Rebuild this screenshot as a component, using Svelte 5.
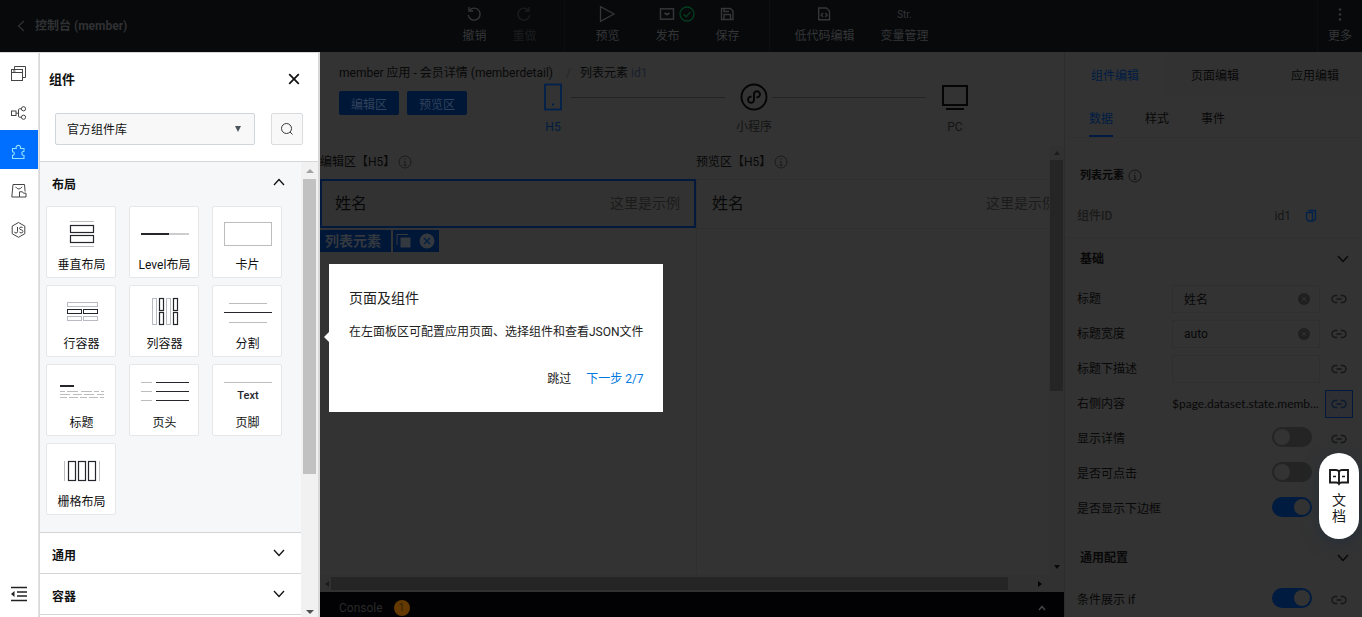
<script>
  const groups = [
    [
      { label: '撤销', icon: 'undo' },
      { label: '重做', icon: 'redo', off: true }
    ],
    [
      { label: '预览', icon: 'play' },
      { label: '发布', icon: 'publish', done: true },
      { label: '保存', icon: 'save' }
    ],
    [
      { label: '低代码编辑', icon: 'code' },
      { label: '变量管理', icon: 'str' }
    ]
  ];
  const rail = [
    { name: '页面', icon: 'pages' },
    { name: '结构', icon: 'tree' },
    { name: '组件', icon: 'puzzle' },
    { name: '素材', icon: 'assets' },
    { name: '脚本', icon: 'js' }
  ];
  const cards = ['垂直布局', 'Level布局', '卡片', '行容器', '列容器', '分割', '标题', '页头', '页脚', '栅格布局'];
  const fields = [
    { id: 'title', label: '标题', kind: 'text', value: '姓名' },
    { id: 'width', label: '标题宽度', kind: 'text', value: 'auto' },
    { id: 'desc', label: '标题下描述', kind: 'text', value: '' },
    { id: 'right', label: '右侧内容', kind: 'bound', value: '$page.dataset.state.memb...' },
    { id: 'detail', label: '显示详情', kind: 'switch', on: false },
    { id: 'click', label: '是否可点击', kind: 'switch', on: false },
    { id: 'border', label: '是否显示下边框', kind: 'switch', on: true }
  ];
</script>

{#snippet icon(name)}
  {#if name === 'undo' || name === 'redo'}
    <svg width="16" height="16" viewBox="0 0 16 16" fill="none" stroke="currentColor" stroke-width="1.4">
      <g transform={name === 'redo' ? 'translate(16 0) scale(-1 1)' : undefined}>
        <path d="M3.6 4.2A6 6 0 1 1 2.2 9" /><path d="M3 1v4h4.2" />
      </g>
    </svg>
  {:else if name === 'play'}
    <svg width="18" height="18" viewBox="0 0 18 18" fill="none" stroke="currentColor" stroke-width="1.3"><path d="M2.5 1.6v14.8L16 9z" /></svg>
  {:else if name === 'publish'}
    <svg width="16" height="16" viewBox="0 0 16 16" fill="none" stroke="currentColor" stroke-width="1.5"><rect x="1.5" y="2.8" width="13" height="10.4" /><path d="M5.500 7l2.500 1.600L10.500 7" stroke-width="2" /></svg>
  {:else if name === 'save'}
    <svg width="16" height="16" viewBox="0 0 16 16" fill="none" stroke="currentColor" stroke-width="1.4"><path d="M2.5 2.5h9l2.5 2.5v8.5H2.5zM5 13.500V8.500h6.500v5M5 2.500v3h5" /></svg>
  {:else if name === 'code'}
    <svg width="16" height="16" viewBox="0 0 16 16" fill="none" stroke="currentColor" stroke-width="1.4"><path d="M2.700 2h7.800l3 3v8.800H2.700zM7 7L5.200 9 7 11M9.300 7l1.800 2-1.800 2" /></svg>
  {:else if name === 'pages'}
    <svg width="18" height="18" viewBox="0 0 18 18" fill="none" stroke="currentColor"><rect x="1.500" y="4.500" width="11" height="11" /><path d="M1.500 7.500h11M4.500 4V1.500h11v11h-2.500M3 6h2.500" /></svg>
  {:else if name === 'tree'}
    <svg width="18" height="18" viewBox="0 0 18 18" fill="none" stroke="currentColor"><rect x="1.500" y="7" width="4.500" height="4.500" /><circle cx="13.500" cy="4.800" r="2.100" /><circle cx="13.500" cy="13.200" r="2.100" /><path d="M6 9.200h3M11.400 4.800H9.500q-1 0-1 1v6.400q0 1 1 1h1.900" /></svg>
  {:else if name === 'puzzle'}
    <svg width="18" height="18" viewBox="0 0 18 18" fill="none" stroke="currentColor" stroke-width="1.100"><path d="M2.500 5.500h3.700a2.300 2.300 0 1 1 4.300 0h3.500v2.700a2.100 2.100 0 1 0 0 4.300v3H2.500v-3.200a1.800 1.800 0 0 0 0-3.600z" /></svg>
  {:else if name === 'assets'}
    <svg width="18" height="18" viewBox="0 0 18 18" fill="none" stroke="currentColor"><path d="M9.500 15H1.800L3 2.500h11.500l.6 7M5.500 4.800q3.300 4.400 6.600 0M9.500 9.800h3l1 1.400h2.500V15H9.500z" /></svg>
  {:else if name === 'js'}
    <svg width="18" height="18" viewBox="0 0 18 18" fill="none" stroke="currentColor"><path d="M8.500 1.500l6.300 3.600v7.600l-6.300 3.600-6.300-3.600V5.100zM7.500 6v4.500q0 1.500-1.500 1.500t-1.500-1.200M12.700 7q-.4-.9-1.600-.9-1.600 0-1.600 1.300 0 1.100 1.700 1.400 1.700.3 1.700 1.600 0 1.500-1.700 1.500-1.400 0-1.800-1.100" /></svg>
  {:else if name === 'link'}
    <svg width="16" height="10" viewBox="0 0 16 10" fill="none" stroke="currentColor" stroke-width="1.400"><path d="M6.200 1.500H4.500a3.500 3.500 0 0 0 0 7h1.700M9.800 1.500h1.700a3.500 3.500 0 0 1 0 7H9.800M5.500 5h5" /></svg>
  {:else if name === 'info'}
    <svg width="14" height="14" viewBox="0 0 14 14" fill="none" stroke="currentColor"><circle cx="7" cy="7" r="6" /><path d="M7 3.300v1.400M5.800 6.500H7v3.800M5.500 10.400h3" /></svg>
  {:else if name === 'down'}
    <svg width="12" height="8" viewBox="0 0 12 8" fill="none" stroke="currentColor" stroke-width="1.300"><path d="M1 1l5 5.500L11 1" /></svg>
  {:else if name === 'up'}
    <svg width="12" height="8" viewBox="0 0 12 8" fill="none" stroke="currentColor" stroke-width="1.300"><path d="M1 7l5-5.500L11 7" /></svg>
  {/if}
{/snippet}

{#snippet art(name)}
  <svg class="art" width="48" height="38" viewBox="0 0 48 38" fill="none" stroke="#25262c">
    {#if name === '垂直布局'}
      <path d="M12 6.500h24M12 31.500h24" stroke="#bdbdbf" />
      <rect x="12.500" y="10.500" width="23" height="7" stroke-width="1.200" /><rect x="12.500" y="20.500" width="23" height="7" stroke-width="1.200" />
    {:else if name === 'Level布局'}
      <path d="M28 19h20" stroke="#bdbdbf" stroke-width="1.500" /><path d="M0 19h28" stroke-width="2" />
    {:else if name === '卡片'}
      <rect x=".5" y="7.500" width="47" height="23" stroke="#bdbdbf" />
    {:else if name === '行容器'}
      <g stroke="#b8bac4"><rect x="9.500" y="8.500" width="30" height="4" /><rect x="9.500" y="22.500" width="14" height="4" /><rect x="25.500" y="22.500" width="14" height="4" /></g>
      <rect x="9.500" y="15.500" width="14" height="4" /><rect x="25.500" y="15.500" width="14" height="4" />
    {:else if name === '列容器'}
      <g stroke="#b8bac4"><rect x="11.500" y="4.500" width="4" height="26" /><rect x="25.500" y="4.500" width="4" height="26" /></g>
      <g stroke-width="1.200"><rect x="18.500" y="4.500" width="4" height="12" /><rect x="18.500" y="18.500" width="4" height="12" /><rect x="32.500" y="4.500" width="4" height="12" /><rect x="32.500" y="18.500" width="4" height="12" /></g>
    {:else if name === '分割'}
      <path d="M5 9.500h38M5 28.500h38" stroke="#bdbdbf" /><path d="M0 18.500h48" />
    {:else if name === '标题'}
      <path d="M2 13h14" stroke-width="2" />
      <path d="M2 18.500h44" stroke="#bdbdbf" stroke-dasharray="5 2 11 3 11 2" /><path d="M2 21.500h44" stroke="#bdbdbf" stroke-dasharray="10 3 9 2" /><path d="M2 24.500h44" stroke="#bdbdbf" stroke-dasharray="7 2 9 2" />
    {:else if name === '页头'}
      <path d="M0 9.500h11M0 18.500h11M0 27.500h11" stroke="#bdbdbf" /><path d="M15 9.500h33M15 18.500h33M15 27.500h33" />
    {:else if name === '页脚'}
      <path d="M0 9.500h48" stroke="#bdbdbf" />
      <text x="24" y="26" text-anchor="middle" font-size="11" font-weight="500" fill="#25262c" stroke="none">Text</text>
    {:else}
      <path d="M6.500 9v20M41.500 9v20" stroke="#bdbdbf" />
      <g stroke-width="1.200"><rect x="10.500" y="9.500" width="7" height="19" /><rect x="20.500" y="9.500" width="7" height="19" /><rect x="30.500" y="9.500" width="7" height="19" /></g>
    {/if}
  </svg>
{/snippet}

<div class="app">
  <header class="top">
    <a class="brand" href="#console">
      <svg width="8" height="12" viewBox="0 0 8 12" fill="none" stroke="currentColor" stroke-width="1.300"><path d="M7 1L1.500 6 7 11" /></svg>
      <span>控制台 (member)</span>
    </a>
    {#each groups as group, g}
      <div class="group g{g}">
        {#each group as tool}
          <button class="tool" class:off={tool.off}>
            <span class="glyph">
              {#if tool.icon === 'str'}<span class="str">Str.</span>{:else}{@render icon(tool.icon)}{/if}
              {#if tool.done}
                <svg class="done" width="16" height="16" viewBox="0 0 16 16" fill="none" stroke="currentColor" stroke-width="1.300"><circle cx="8" cy="8" r="7" /><path d="M4.500 8.200l2.600 2.500 4.400-4.800" /></svg>
              {/if}
            </span>
            <span>{tool.label}</span>
          </button>
        {/each}
      </div>
    {/each}
    <button class="tool more">
      <span class="glyph"><svg width="16" height="16" viewBox="0 0 16 16" fill="currentColor"><circle cx="8" cy="3.500" r="1.300" /><circle cx="8" cy="8.500" r="1.300" /><circle cx="8" cy="13.500" r="1.300" /></svg></span>
      <span>更多</span>
    </button>
  </header>

  <div class="main">
    <nav class="rail">
      {#each rail as item}
        <button class:active={item.icon === 'puzzle'} aria-label={item.name}>{@render icon(item.icon)}</button>
      {/each}
      <button class="collapse" aria-label="收起">
        <svg width="18" height="16" viewBox="0 0 18 16" stroke="currentColor" stroke-width="1.700"><path d="M1 1.500h16M7 6h10M7 10h10M1 14.500h16" /><path d="M1 8l3.500-3v6z" fill="currentColor" stroke="none" /></svg>
      </button>
    </nav>

    <aside class="library">
      <div class="lib-head">
        <h2>组件</h2>
        <button aria-label="关闭"><svg width="12" height="12" viewBox="0 0 12 12" stroke="#111" stroke-width="1.700"><path d="M1.200 1.200l9.600 9.600M10.800 1.200l-9.600 9.600" /></svg></button>
      </div>
      <div class="lib-filter">
        <div class="select">
          <select aria-label="组件库"><option>官方组件库</option></select>
          <svg width="6" height="6" viewBox="0 0 6 6" fill="#4a565c"><path d="M0 0h6L3 6z" /></svg>
        </div>
        <button class="search" aria-label="搜索"><svg width="14" height="14" viewBox="0 0 14 14" fill="none" stroke="#3a3a3a"><circle cx="6.500" cy="6.500" r="5" /><path d="M10 10l2.500 2.500" /></svg></button>
      </div>
      <div class="lib-body">
        <div class="sections">
          <section class="open">
            <button class="sec-head"><span>布局</span>{@render icon('up')}</button>
            <div class="cards">
              {#each cards as card}
                <button class="card">{@render art(card)}<span>{card}</span></button>
              {/each}
            </div>
          </section>
          <section><button class="sec-head"><span>通用</span>{@render icon('down')}</button></section>
          <section><button class="sec-head"><span>容器</span>{@render icon('down')}</button></section>
        </div>
        <div class="vbar light">
          <svg width="8" height="4" viewBox="0 0 8 4" fill="#a3a3a3"><path d="M0 4l4-4 4 4z" /></svg>
          <div class="track"><i></i></div>
          <svg width="8" height="4" viewBox="0 0 8 4" fill="#505050"><path d="M0 0l4 4 4-4z" /></svg>
        </div>
      </div>
    </aside>

    <main class="center">
      <div class="crumbs"><span>member 应用 - 会员详情 (memberdetail)</span><span class="sep">/</span><span>列表元素 <em>id1</em></span></div>
      <div class="modes">
        <button class="primary">编辑区</button>
        <button class="primary">预览区</button>
        <div class="steps">
          <button class="step on"><svg width="18" height="28" viewBox="0 0 18 28" fill="none" stroke="currentColor" stroke-width="1.800"><rect x="1" y="1.500" width="16" height="25" /><path d="M8 21.500h2" /></svg><span>H5</span></button>
          <i></i>
          <button class="step"><svg width="28" height="28" viewBox="0 0 28 28" fill="none" stroke="currentColor" stroke-width="1.900"><circle cx="14" cy="14" r="12.500" /><path d="M11.500 13.800a3 3 0 1 0 2.500 3V11.200a3 3 0 1 1 2.500 3" /></svg><span>小程序</span></button>
          <i></i>
          <button class="step"><svg width="28" height="28" viewBox="0 0 28 28" fill="none" stroke="currentColor" stroke-width="2"><rect x="2" y="3" width="24" height="19" /><path d="M5 26h18" /></svg><span>PC</span></button>
        </div>
      </div>

      <div class="stage">
        <div class="canvas">
          <div class="pane">
            <h3>编辑区【H5】{@render icon('info')}</h3>
            <div class="item picked"><span>姓名</span><small>这里是示例</small></div>
            <div class="tag">
              <b>列表元素</b>
              <span class="acts">
                <svg width="16" height="16" viewBox="0 0 16 16"><path d="M1 12V1.500h11" fill="none" stroke="currentColor" /><rect x="4.500" y="4.500" width="10" height="10" fill="currentColor" /></svg>
                <svg width="16" height="16" viewBox="0 0 16 16"><circle cx="8" cy="8" r="7.500" fill="currentColor" /><path d="M5 5l6 6M11 5l-6 6" stroke="#001e40" stroke-width="1.300" /></svg>
              </span>
            </div>
          </div>
          <div class="pane">
            <h3>预览区【H5】{@render icon('info')}</h3>
            <div class="screen"><div class="item"><span>姓名</span><small>这里是示例</small></div></div>
          </div>
        </div>
        <div class="vbar dim">
          <svg width="6" height="4" viewBox="0 0 6 4" fill="#1c1c1c"><path d="M0 4l3-4 3 4z" /></svg>
          <div class="track"><i></i></div>
          <svg width="6" height="4" viewBox="0 0 6 4" fill="#0a0a0a"><path d="M0 0l3 4 3-4z" /></svg>
        </div>
      </div>
      <div class="hbar">
        <svg width="4" height="6" viewBox="0 0 4 6" fill="#1c1c1c"><path d="M4 0L0 3l4 3z" /></svg>
        <div class="htrack"><i></i></div>
        <svg width="4" height="6" viewBox="0 0 4 6" fill="#050505"><path d="M0 0l4 3-4 3z" /></svg>
      </div>
      <footer><span>Console</span><b>1</b><svg width="8" height="6" viewBox="0 0 8 6" fill="none" stroke="currentColor" stroke-width="1.500"><path d="M1 5l3-3.500L7 5" /></svg></footer>
    </main>

    <aside class="props">
      <div class="tabs"><button class="on">组件编辑</button><button>页面编辑</button><button>应用编辑</button></div>
      <div class="subtabs"><button class="on">数据</button><button>样式</button><button>事件</button></div>
      <h4 class="kind">列表元素 {@render icon('info')}</h4>
      <div class="row ident">
        <b>组件ID</b><span>id1</span>
        <button aria-label="复制"><svg width="12" height="14" viewBox="0 0 12 14" fill="none" stroke="currentColor" stroke-width="1.300"><path d="M3.500 1.500h7v8.500L8.500 12" /><path d="M1.500 3.500h6v8.500h-4l-2-2z" /></svg></button>
      </div>
      <h4 class="block">基础{@render icon('down')}</h4>
      {#each fields as f}
        <div class="row">
          <label for={f.id}>{f.label}</label>
          {#if f.kind === 'text'}
            <div class="field">
              <input id={f.id} type="text" value={f.value} />
              {#if f.value}<svg width="12" height="12" viewBox="0 0 12 12"><circle cx="6" cy="6" r="6" fill="#202020" /><path d="M4.200 4.200l3.600 3.600M7.800 4.200L4.200 7.800" stroke="#333" /></svg>{/if}
            </div>
          {:else if f.kind === 'bound'}
            <output id={f.id}>{f.value}</output>
          {:else}
            <input id={f.id} class="switch" type="checkbox" checked={f.on} />
          {/if}
          <button class="link" class:bound={f.kind === 'bound'} aria-label="绑定数据">{@render icon('link')}</button>
        </div>
      {/each}
      <h4 class="block second">通用配置{@render icon('down')}</h4>
      <div class="row">
        <label for="cond">条件展示 if</label>
        <input id="cond" class="switch" type="checkbox" checked />
        <button class="link" aria-label="绑定数据">{@render icon('link')}</button>
      </div>
    </aside>
  </div>

  <div class="guide" role="dialog" aria-labelledby="guide-title">
    <h2 id="guide-title">页面及组件</h2>
    <p>在左面板区可配置应用页面、选择组件和查看JSON文件</p>
    <div class="guide-foot"><button>跳过</button><button class="next">下一步 2/7</button></div>
  </div>

  <button class="docs">
    <svg width="20" height="18" viewBox="0 0 20 18" fill="none" stroke="#1a1a1a" stroke-width="1.900"><path d="M10 3.300Q9 2 7 2H1v12.500h6.500q1.500 0 2.500 1.500 1-1.500 2.500-1.500H19V2h-6q-2 0-3 1.300zV16" /><path d="M4 8.500h3M13 8.500h3" stroke-width="1.600" /></svg>
    <span>文<br />档</span>
  </button>
</div>

<style>
  :global(body) { background: #333; }
  .app, .app :global(*) { box-sizing: border-box; }
  .app {
    position: relative;
    display: flex;
    flex-direction: column;
    height: 100vh;
    overflow: hidden;
    font: 12px/20px Roboto, "Noto Sans CJK SC", sans-serif;
    color: #080808;
  }
  button, input, select { font: inherit; color: inherit; }
  button { padding: 0; border: 0; background: none; cursor: pointer; }
  h2, h3, h4, p { margin: 0; font-size: 12px; }
  svg { flex: none; display: block; }

  .top { flex: none; display: flex; height: 52px; background: #07090b; color: #343638; }
  .brand { width: 33%; display: flex; align-items: center; gap: 10px; padding-left: 17px; color: #303133; font-weight: 700; text-decoration: none; }
  .group { display: flex; }
  .g1 { padding: 0 12px; margin: 0 14px 0 15px; border: solid #0c0e10; border-width: 0 1px; }
  .tool { display: flex; flex-direction: column; align-items: center; gap: 4px; padding-top: 6px; }
  .g0 .tool { width: 50px; }
  .g1 .tool { width: 60px; }
  .g2 .tool { width: 80px; }
  .off { color: #1b1d1f; }
  .glyph { display: flex; align-items: center; justify-content: center; height: 16px; position: relative; }
  .done { position: absolute; left: 20px; color: #053d20; }
  .str { font-size: 10px; padding-top: 2px; }
  .more { width: 45px; margin-left: auto; border-left: 1px solid #0c0e10; }

  .main { flex: 1; display: flex; min-height: 0; }
  .rail { flex: none; width: 39px; display: flex; flex-direction: column; background: #fff; box-shadow: inset 0 1px #d8d8d8; border-right: 1px solid #e4e4e4; color: #444; }
  .rail button { height: 39px; display: flex; align-items: center; justify-content: center; padding-top: 4px; }
  .rail .active { background: #006eff; color: #8fe0ff; }
  .rail .collapse { margin-top: auto; margin-bottom: 6px; color: #222; }

  .library { flex: none; width: 281px; display: flex; flex-direction: column; background: #fff; border-top: 1px solid #d8d8d8; border-left: 1px solid #d8d8d8; border-right: 2px solid #d8d8d8; color: #111; }
  .lib-head { display: flex; align-items: center; justify-content: space-between; height: 52px; padding: 0 18px 0 9px; }
  .lib-head h2 { font-size: 13px; padding-top: 1px; }
  .lib-filter { display: flex; justify-content: space-between; gap: 16px; padding: 8px 15px 16px; }
  .select { flex: 1; position: relative; display: flex; align-items: center; }
  .select select { width: 100%; height: 32px; padding: 2px 11px 0; appearance: none; background: #f8f8f8; border: 1px solid #cfd5d9; border-radius: 2px; }
  .select svg { position: absolute; right: 14px; }
  .search { width: 32px; height: 32px; display: grid; place-items: center; background: #f8f8f8; border: 1px solid #d9dde0; border-radius: 2px; }
  .lib-body { flex: 1; display: flex; min-height: 0; border-top: 1px solid #d5d8da; }
  .sections { flex: 1; overflow: hidden; }
  section { background: #fff; border-bottom: 1px solid #d2d4d6; }
  .open { background: #f6f7f9; padding-bottom: 17px; }
  .sec-head { display: flex; width: 100%; height: 40px; padding: 0 16px 0 12px; align-items: center; justify-content: space-between; font-weight: 700; }
  .sec-head span { padding-top: 5px; }
  .open .sec-head { height: 44px; padding-bottom: 4px; }
  .cards { display: grid; grid-template-columns: repeat(3, 70px); gap: 7px 13px; padding-left: 6px; }
  .card { height: 72px; display: flex; flex-direction: column; align-items: center; padding: 8px 0 0 1px; background: #fff; border: 1px solid #e5e7e9; border-radius: 2px; }
  .card span { margin-top: 2px; white-space: nowrap; }
  .vbar { flex: none; display: flex; flex-direction: column; align-items: center; }
  .vbar .track { flex: 1; width: 100%; }
  .vbar i { display: block; }
  .light { width: 17px; padding: 7px 2px 3px; background: #f1f1f1; }
  .light .track { margin: 6px 0 10px; }
  .light i { height: 70%; background: #c1c1c1; }

  .center { flex: 1; min-width: 0; display: flex; flex-direction: column; background: #333; }
  .crumbs { display: flex; height: 30px; padding: 11px 0 0 19px; }
  .crumbs span { white-space: nowrap; }
  .crumbs .sep { width: 27px; text-align: center; padding-left: 4px; color: #262626; }
  .crumbs em { font-style: normal; color: #18202b; }
  .modes { display: flex; gap: 8px; height: 61px; padding: 0 91px 0 19px; }
  .primary { flex: none; width: 60px; height: 24px; margin-top: 9px; padding-top: 3px; background: #001737; border-radius: 2px; color: #30425c; }
  .steps { flex: 1; display: flex; margin-left: 60px; padding-top: 1px; }
  .steps i { flex: 1; height: 1px; margin: 14px 11px 0 0; background: #242424; }
  .step { width: 36px; height: 56px; display: flex; flex-direction: column; align-items: center; gap: 6px; white-space: nowrap; color: #141414; }
  .step svg { color: #050505; }
  .step.on { color: #001c40; }
  .step.on svg { color: #00214c; }

  .stage { flex: 1; display: flex; min-height: 0; padding-top: 3px; }
  .canvas { flex: 1; min-width: 0; display: flex; overflow: hidden; }
  .pane { flex: 0 0 376px; }
  .pane + .pane { display: flex; flex-direction: column; }
  .pane h3 { display: flex; align-items: center; gap: 3px; height: 32px; margin-bottom: 1px; font-weight: 400; }
  .pane h3 :global(svg) { color: #1b1b1b; }
  .item { display: flex; align-items: center; justify-content: space-between; height: 49px; padding: 0 16px; }
  .item span { font-size: 16px; }
  .item small { font-size: 14px; color: #1b1b1b; padding-bottom: 2px; }
  .picked { padding: 0 14px 0 13px; border: 2px solid #00193c; background: #323232; }
  .screen { flex: 1; border-top: 1px solid #2f2f2f; border-left: 1px solid #2f2f2f; }
  .screen .item { border-bottom: 1px solid #2f2f2f; padding-left: 15px; }
  .tag { display: flex; gap: 2px; margin-top: 2px; color: #34383f; }
  .tag b { height: 22px; padding: 0 10px 0 5px; background: #001737; font-size: 14px; line-height: 22px; }
  .acts { display: flex; align-items: center; gap: 7px; padding: 0 4px 0 3px; background: #001737; }
  .dim { width: 15px; padding: 5px 1px 6px; background: #313131; }
  .dim .track { margin: 5px 0 7px; }
  .dim i { height: 58%; background: #252525; }
  .hbar { display: flex; align-items: center; gap: 2px; height: 17px; padding: 0 22px 0 5px; background: #313131; }
  .htrack { flex: 1; height: 13px; }
  .htrack i { display: block; width: 96%; height: 100%; background: #252525; }
  footer { display: flex; align-items: center; gap: 11px; height: 25px; padding: 6px 18px 0 19px; background: #020204; color: #292929; }
  footer b { width: 16px; height: 16px; border-radius: 8px; background: #633900; color: #2d1d08; font-size: 10px; line-height: 16px; text-align: center; font-weight: 400; }
  footer svg { margin-left: auto; color: #444; }

  .props { flex: none; width: 298px; background: #333; border-left: 1px solid #2c2c2c; overflow: hidden; }
  .tabs { display: flex; height: 45px; }
  .tabs button { flex: 0 0 100px; padding-top: 3px; background: #323232; }
  .tabs .on { background: #333; }
  .tabs .on, .subtabs .on { color: #001c43; }
  .subtabs { display: flex; gap: 32px; height: 41px; padding-left: 24px; border-bottom: 1px solid #303030; }
  .subtabs button { padding-top: 5px; border-bottom: 2px solid transparent; }
  .subtabs .on { border-color: #001c43; }
  .kind { display: flex; align-items: center; gap: 4px; height: 39px; padding-left: 15px; margin-top: 18px; font-size: 11px; }
  .kind :global(svg) { color: #151515; }
  .row { display: flex; align-items: center; height: 35px; padding: 0 9px 0 12px; }
  .row label { margin-right: auto; }
  .ident { height: 43px; border-bottom: 1px solid #303030; }
  .ident b { margin-right: auto; color: #1a1a1a; font-weight: 500; }
  .ident span { color: #151515; }
  .ident button { margin: 0 36px 0 14px; color: #00214c; }
  .block { display: flex; align-items: center; justify-content: space-between; height: 43px; padding: 0 13px 2px 15px; }
  .second { height: 56px; padding-top: 10px; }
  .field { position: relative; display: flex; align-items: center; width: 148px; }
  .field input { width: 100%; height: 28px; padding: 0 30px 0 11px; background: #333; border: 1px solid #2f2f2f; outline: 0; }
  .field svg { position: absolute; right: 10px; }
  output { width: 148px; white-space: nowrap; font-family: Lato, sans-serif; }
  .link { display: grid; place-items: center; width: 28px; height: 28px; margin-left: 5px; color: #171717; }
  .bound { border: 1px solid #00193c; background: #2d2f33; color: #0c1a2e; }
  .switch { appearance: none; width: 40px; height: 20px; margin: 0 13px 3px 0; padding: 2px; border-radius: 10px; background: #242424; }
  .switch::before { content: ""; display: block; width: 16px; height: 16px; border-radius: 8px; background: #333; }
  .switch:checked { background: #001b40; }
  .switch:checked::before { margin-left: 20px; }
  .switch + .link { margin-left: 0; }

  .guide { position: absolute; left: 329px; top: 264px; padding: 20px 19px 20px 20px; background: #fff; color: #222; }
  .guide::before { content: ""; position: absolute; left: -5px; top: 68px; border: solid transparent; border-width: 5px 5px 5px 0; border-right-color: #fff; }
  .guide h2 { font-size: 14px; font-weight: 400; line-height: 28px; }
  .guide p { margin-top: 10px; white-space: nowrap; }
  .guide-foot { display: flex; justify-content: flex-end; gap: 15px; margin-top: 27px; padding-bottom: 3px; }
  .next { color: #0078e0; }

  .docs { position: absolute; right: 3px; top: 453px; width: 40px; height: 86px; display: flex; flex-direction: column; align-items: center; gap: 6px; padding-top: 15px; border-radius: 20px; background: #fff; color: #1a1a1a; box-shadow: 0 4px 16px #26303a; font-size: 14px; line-height: 16px; }
</style>
